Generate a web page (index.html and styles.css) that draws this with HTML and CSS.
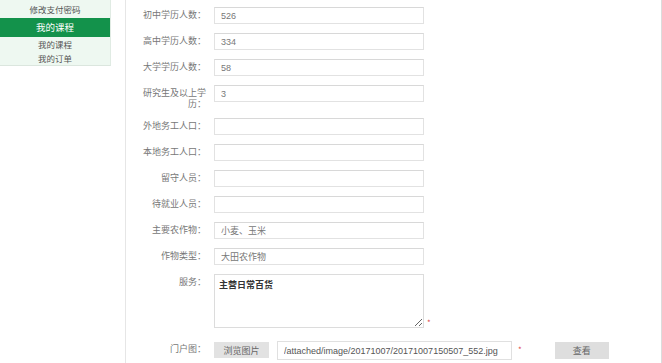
FILE: index.html
```html
<!DOCTYPE html>
<html lang="zh-CN">
<head>
    <meta charset="UTF-8">
    <meta name="viewport" content="width=device-width, initial-scale=1.0">
    <title>个人中心</title>
    <link rel="stylesheet" href="styles.css">
</head>
<body>
    <div class="page">
        <div class="sidebar">
            <div class="side-item">修改支付密码</div>
            <div class="side-title">我的课程</div>
            <div class="side-sub">我的课程</div>
            <div class="side-sub">我的订单</div>
        </div>

        <div class="main">
            <form class="info-form">
                <div class="form-row">
                    <label class="form-label">初中学历人数：</label>
                    <input class="form-input" type="text" value="526">
                </div>
                <div class="form-row">
                    <label class="form-label">高中学历人数：</label>
                    <input class="form-input" type="text" value="334">
                </div>
                <div class="form-row">
                    <label class="form-label">大学学历人数：</label>
                    <input class="form-input" type="text" value="58">
                </div>
                <div class="form-row">
                    <label class="form-label">研究生及以上学历：</label>
                    <input class="form-input" type="text" value="3">
                </div>
                <div class="form-row">
                    <label class="form-label">外地务工人口：</label>
                    <input class="form-input" type="text">
                </div>
                <div class="form-row">
                    <label class="form-label">本地务工人口：</label>
                    <input class="form-input" type="text">
                </div>
                <div class="form-row">
                    <label class="form-label">留守人员：</label>
                    <input class="form-input" type="text">
                </div>
                <div class="form-row">
                    <label class="form-label">待就业人员：</label>
                    <input class="form-input" type="text">
                </div>
                <div class="form-row">
                    <label class="form-label">主要农作物：</label>
                    <input class="form-input" type="text" value="小麦、玉米">
                </div>
                <div class="form-row">
                    <label class="form-label">作物类型：</label>
                    <input class="form-input" type="text" value="大田农作物">
                </div>
                <div class="form-row row-area">
                    <label class="form-label">服务：</label>
                    <textarea class="form-area">主营日常百货</textarea>
                    <span class="required">*</span>
                </div>
                <div class="form-row">
                    <label class="form-label">门户图：</label>
                    <button type="button" class="gray-btn browse-btn">浏览图片</button>
                    <input class="path-input" type="text" value="/attached/image/20171007/20171007150507_552.jpg">
                    <span class="required path-star">*</span>
                    <button type="button" class="gray-btn view-btn">查看</button>
                </div>
            </form>
        </div>
    </div>
</body>
</html>
```

FILE: styles.css
```css
body {
    margin: 0;
    font-family: "Noto Sans CJK SC", "Liberation Sans", sans-serif;
    font-size: 9px;
    color: #666;
    background-color: #fff;
}
.page {
    display: flex;
    height: 100vh;
}
.sidebar {
    width: 110px;
    flex-shrink: 0;
    align-self: flex-start;
    margin-right: 14px;
    background-color: #eef8f1;
    border-right: 1px solid #e0ebe3;
    border-bottom: 1px solid #dbe6de;
    text-align: center;
    color: #555;
}
.side-item {
    height: 18px;
    line-height: 18px;
    font-size: 8.5px;
}
.side-title {
    height: 19px;
    line-height: 19px;
    background-color: #13924b;
    color: #fff;
    font-size: 9.5px;
}
.side-sub {
    height: 14px;
    line-height: 14px;
    font-size: 8.5px;
}
.main {
    flex: 1;
    border-left: 1px solid #e6e6e6;
    border-right: 1px solid #dcdcdc;
    padding-top: 7px;
}
.form-row {
    display: flex;
    align-items: flex-start;
    margin-bottom: 9px;
}
.form-label {
    width: 80px;
    margin-right: 8px;
    padding-top: 2px;
    line-height: 11px;
    text-align: right;
    color: #777;
}
.form-input {
    box-sizing: border-box;
    width: 210px;
    height: 17px;
    margin: 0;
    padding: 0 6px;
    border: 1px solid #e2e2e2;
    border-top-color: #d8d8d8;
    font-family: "Liberation Sans", "Noto Sans CJK SC", sans-serif;
    font-size: 9px;
    color: #777;
    outline: none;
}
.row-area {
    margin-bottom: 13px;
}
.form-area {
    box-sizing: border-box;
    width: 210px;
    height: 54px;
    margin: 0;
    padding: 3px 4px;
    border: 1px solid #dcdcdc;
    font-family: "Noto Sans CJK SC", sans-serif;
    font-size: 9px;
    font-weight: bold;
    color: #333;
    resize: both;
    outline: none;
}
.required {
    align-self: flex-end;
    margin-left: 3px;
    color: #e04848;
    font-size: 8px;
    line-height: 10px;
}
.gray-btn {
    height: 16px;
    margin: 1px 0 0;
    padding: 0;
    border: none;
    background-color: #e2e2e2;
    font-family: "Noto Sans CJK SC", sans-serif;
    font-size: 9px;
    color: #666;
}
.browse-btn {
    width: 55px;
    margin-right: 8px;
}
.path-input {
    box-sizing: border-box;
    width: 235px;
    height: 19px;
    margin: 0;
    padding: 0 6px;
    border: 1px solid #e0e0e0;
    font-family: "Liberation Sans", sans-serif;
    font-size: 9px;
    color: #555;
    outline: none;
}
.path-star {
    align-self: flex-start;
    margin-left: 6px;
    margin-right: 33px;
    padding-top: 4px;
}
.view-btn {
    width: 54px;
    height: 17px;
    background-color: #dedede;
}
```
